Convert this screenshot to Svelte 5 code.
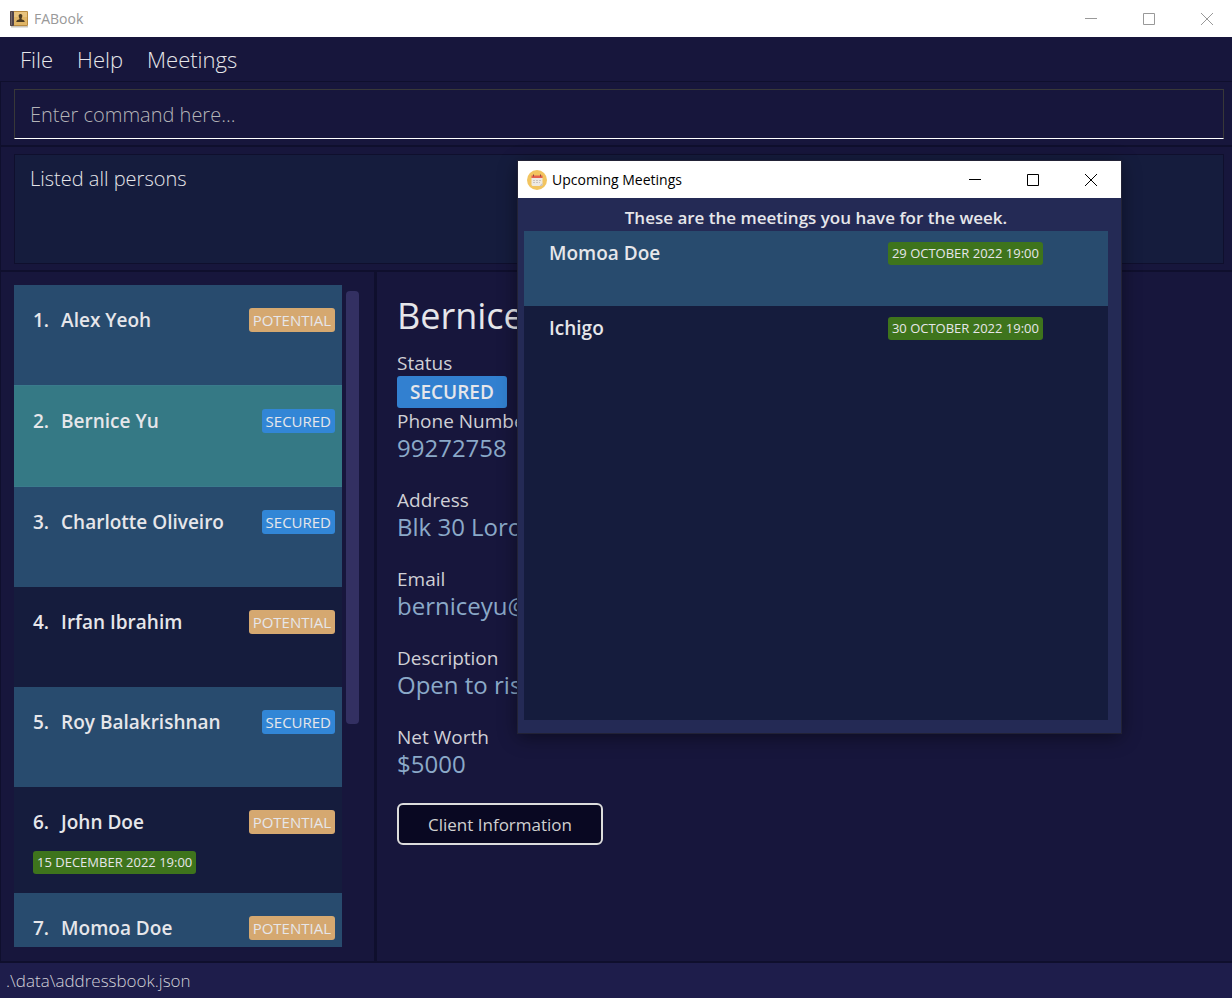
<script>
  const menus = ['File', 'Help', 'Meetings'];

  const persons = [
    { name: 'Alex Yeoh', status: 'POTENTIAL' },
    { name: 'Bernice Yu', status: 'SECURED' },
    { name: 'Charlotte Oliveiro', status: 'SECURED' },
    { name: 'Irfan Ibrahim', status: 'POTENTIAL' },
    { name: 'Roy Balakrishnan', status: 'SECURED' },
    { name: 'John Doe', status: 'POTENTIAL', meeting: '15 DECEMBER 2022 19:00' },
    { name: 'Momoa Doe', status: 'POTENTIAL' }
  ];

  const details = [
    { label: 'Phone Number', value: '99272758' },
    { label: 'Address', value: 'Blk 30 Lorong 3' },
    { label: 'Email', value: 'berniceyu@example.com' },
    { label: 'Description', value: 'Open to risks' },
    { label: 'Net Worth', value: '$5000' }
  ];

  const meetings = [
    { name: 'Momoa Doe', date: '29 OCTOBER 2022 19:00' },
    { name: 'Ichigo', date: '30 OCTOBER 2022 19:00' }
  ];

  let selected = $state(1);
  let command = $state('');
</script>

{#snippet controls()}
  <div class="controls">
    <button aria-label="Minimize"><svg width="12" height="12" viewBox="0 0 12 12"><path d="M0 5.5h12" /></svg></button>
    <button aria-label="Maximize"><svg width="12" height="12" viewBox="0 0 12 12"><path d="M.5.5h11v11H.5z" /></svg></button>
    <button aria-label="Close"><svg width="12" height="12" viewBox="0 0 12 12"><path d="M0 0l12 12M12 0L0 12" /></svg></button>
  </div>
{/snippet}

<div class="app">
  <header class="titlebar inactive">
    <svg class="logo" width="20" height="20" viewBox="0 0 20 20">
      <path d="M1 17h17v1.500H1z" fill="#c9c4bb" />
      <rect x="0" y="2" width="18" height="15" rx="1" fill="#b98a3e" />
      <rect x="4" y="3" width="13" height="13" fill="#e0b566" />
      <rect x="4" y="3" width="13" height="5" fill="#e8c37d" />
      <rect x="0" y="2" width="4" height="15" rx="1" fill="#51444a" />
      <path d="M1.500 3v13" stroke="#776a6c" />
      <path d="M10.500 5c1.400 0 2 1 1.800 2.200-.1 1-.6 1.500-.8 2.100l.3 1.200c1.600.3 2.900.8 2.900 2.500H6.300c0-1.700 1.300-2.200 2.900-2.500l.3-1.200c-.2-.6-.7-1.100-.8-2.100C8.500 6 9.100 5 10.500 5z" fill="#4b3a22" />
    </svg>
    <span class="caption">FABook</span>
    {@render controls()}
  </header>

  <nav class="menubar">
    {#each menus as menu}
      <button>{menu}</button>
    {/each}
  </nav>

  <section class="pane command">
    <input type="text" aria-label="Command" placeholder="Enter command here..." bind:value={command} />
  </section>

  <section class="pane result">
    <output>Listed all persons</output>
  </section>

  <main>
    <section class="persons">
      <ul>
        {#each persons as person, i}
          <li class:selected={i === selected}>
            <button class="person" onclick={() => (selected = i)}>
              <span class="line">
                <span class="index">{i + 1}.</span>
                <span class="name">{person.name}</span>
                <span class={['tag', person.status.toLowerCase()]}>{person.status}</span>
              </span>
              {#if person.meeting}
                <span class="date">{person.meeting}</span>
              {/if}
            </button>
          </li>
        {/each}
      </ul>
      <div class="track"><div class="thumb"></div></div>
    </section>

    <section class="details">
      <h1>Bernice Yu</h1>
      <div class="label">Status</div>
      <div class="status">SECURED</div>
      <dl>
        {#each details as item}
          <div>
            <dt>{item.label}</dt>
            <dd>{item.value}</dd>
          </div>
        {/each}
      </dl>
      <button class="client">Client Information</button>
    </section>
  </main>

  <footer>.\data\addressbook.json</footer>

  <div class="dialog" role="dialog" aria-labelledby="dialog-title">
    <header class="titlebar">
      <svg class="logo" width="20" height="20" viewBox="0 0 20 20">
        <circle cx="10" cy="10" r="10" fill="#f2c45f" />
        <path d="M4.500 8h11v7l-1 1h-9l-1-1z" fill="#eee9e2" />
        <path d="M4.500 5.500h11V8h-11z" fill="#e5604f" />
        <path d="M6.500 4.500v2M13.500 4.500v2" stroke="#8f4a44" />
        <path d="M6 10.500h2M9 10.500h2M12 10.500h2M6 12.500h2M9 12.500h2M12 12.500h1" stroke="#c9c3c0" />
        <path d="M12.500 16l3-3v2l-1 1z" fill="#c9c1b8" />
      </svg>
      <span class="caption" id="dialog-title">Upcoming Meetings</span>
      {@render controls()}
    </header>
    <div class="dialog-body">
      <h2>These are the meetings you have for the week.</h2>
      <ul class="meetings">
        {#each meetings as meeting}
          <li>
            <span class="name">{meeting.name}</span>
            <span class="date">{meeting.date}</span>
          </li>
        {/each}
      </ul>
    </div>
  </div>
</div>

<style>
  :global(body) {
    margin: 0;
    background: #17163c;
  }

  .app,
  .app * {
    box-sizing: border-box;
  }

  .app {
    position: relative;
    display: flex;
    flex-direction: column;
    height: 100vh;
    overflow: hidden;
    background: #17163c;
    color: #e6e6ea;
    font-family: 'Open Sans', 'Noto Sans', sans-serif;
  }

  button {
    padding: 0;
    border: 0;
    background: none;
    color: inherit;
    font: inherit;
  }

  ul,
  dl,
  dd,
  h1,
  h2 {
    margin: 0;
    padding: 0;
    list-style: none;
  }

  .titlebar {
    display: flex;
    align-items: center;
    flex: none;
    height: 37px;
    padding-left: 10px;
    background: #fff;
    color: #000;
    font-size: 14px;
  }

  .titlebar.inactive {
    color: #999;
  }

  .logo {
    flex: none;
    margin-right: 4px;
  }

  .controls {
    display: flex;
    height: 100%;
    margin-left: auto;
  }

  .controls button {
    display: grid;
    place-items: center;
    width: 58px;
  }

  .inactive .controls {
    margin-right: -4px;
  }

  .controls svg {
    fill: none;
    stroke: currentColor;
  }

  .menubar {
    display: flex;
    flex: none;
    gap: 24px;
    height: 45px;
    padding: 0 20px;
    border-bottom: 1px solid #0f0f2d;
    font-size: 22px;
    font-weight: 300;
  }

  .pane {
    flex: none;
    padding: 7px 8px 6px 13px;
    border-bottom: 2px solid #0f0f2d;
    border-left: 1px solid #0f0f2d;
    font-size: 20px;
    font-weight: 300;
  }

  input {
    display: block;
    width: 100%;
    height: 50px;
    padding: 1px 15px 0;
    border: 1px solid #383838;
    border-bottom-color: #fff;
    outline: 0;
    background: #17163c;
    color: #fff;
    font: inherit;
  }

  input::placeholder {
    color: #b4b4b8;
    opacity: 1;
  }

  output {
    display: block;
    height: 110px;
    padding: 10px 15px;
    border: 1px solid #0f0f2d;
    background: #151c3d;
    line-height: 28px;
  }

  main {
    display: flex;
    flex: 1;
    min-height: 0;
  }

  .persons {
    display: flex;
    flex: 0 0 377px;
    gap: 4px;
    padding: 13px 15px 14px 13px;
    border-right: 3px solid #0f0f2d;
    border-left: 1px solid #0f0f2d;
  }

  .persons ul {
    flex: 1;
    overflow: hidden;
    background: #151c3d;
  }

  .persons li:nth-child(odd) {
    background: #284b6e;
  }

  .persons li.selected {
    border: 1px solid #3a7b8c;
    border-width: 1px 0;
    background: #357985;
  }

  .person {
    display: flex;
    flex-direction: column;
    align-items: flex-start;
    gap: 17px;
    width: 100%;
    min-height: 100px;
    padding: 23px 7px 19px 19px;
    text-align: left;
  }

  .line {
    display: flex;
    gap: 12px;
    width: 100%;
    height: 24px;
    line-height: 24px;
  }

  .index,
  .name {
    font-size: 19px;
    font-weight: 600;
  }

  .tag {
    margin-left: auto;
    padding: 0 4px;
    border-radius: 3px;
    font-size: 15px;
  }

  .potential {
    background: #d5a870;
  }

  .secured {
    background: #3286d6;
  }

  .date {
    height: 23px;
    padding: 0 4px;
    border-radius: 3px;
    background: #3e741c;
    font-size: 13px;
    font-weight: 500;
    line-height: 23px;
  }

  .track {
    width: 13px;
    padding-top: 6px;
  }

  .thumb {
    height: 66%;
    border-radius: 4px;
    background: #333062;
  }

  .details {
    flex: 1;
    min-width: 0;
    padding: 19px 20px;
    white-space: nowrap;
  }

  h1 {
    font-size: 36px;
    font-weight: 400;
    line-height: 50px;
  }

  .label,
  dt {
    color: #d0d0d6;
    font-size: 19px;
    line-height: 26px;
  }

  .label {
    margin-top: 9px;
  }

  .status {
    width: fit-content;
    padding: 0 13px;
    border-radius: 3px;
    background: #3280d0;
    font-size: 19px;
    font-weight: 600;
    line-height: 32px;
  }

  dl {
    display: grid;
    gap: 25px;
  }

  dd {
    color: #8ba9c8;
    font-size: 24px;
    line-height: 28px;
  }

  .client {
    height: 42px;
    margin-top: 25px;
    padding: 0 29px;
    border: 2px solid #dcdcdc;
    border-radius: 6px;
    background: #090822;
    color: #d0d0d0;
    font-size: 17px;
  }

  footer {
    flex: none;
    height: 37px;
    padding: 0 6px;
    border-top: 2px solid #0f0f2d;
    background: #1e1d4b;
    color: #d0d0d8;
    font-size: 17px;
    font-weight: 300;
    line-height: 36px;
  }

  .dialog {
    position: absolute;
    top: 161px;
    left: 518px;
    display: flex;
    flex-direction: column;
    width: 603px;
    height: 572px;
    outline: 1px solid #222236;
    background: #242a55;
    box-shadow: 0 4px 18px rgb(0 0 0 / 45%);
  }

  .dialog .titlebar {
    padding-right: 1px;
    padding-left: 9px;
  }

  .dialog .logo {
    margin-right: 5px;
  }

  .dialog-body {
    display: flex;
    flex: 1;
    flex-direction: column;
    padding: 6px 13px 13px 6px;
  }

  h2 {
    font-size: 17px;
    font-weight: 600;
    line-height: 27px;
    text-align: center;
  }

  .meetings {
    flex: 1;
    background: #151c3d;
  }

  .meetings li {
    display: flex;
    justify-content: space-between;
    height: 75px;
    padding: 11px 65px 0 25px;
    line-height: 23px;
  }

  .meetings li:nth-child(odd) {
    background: #284b6e;
  }
</style>
